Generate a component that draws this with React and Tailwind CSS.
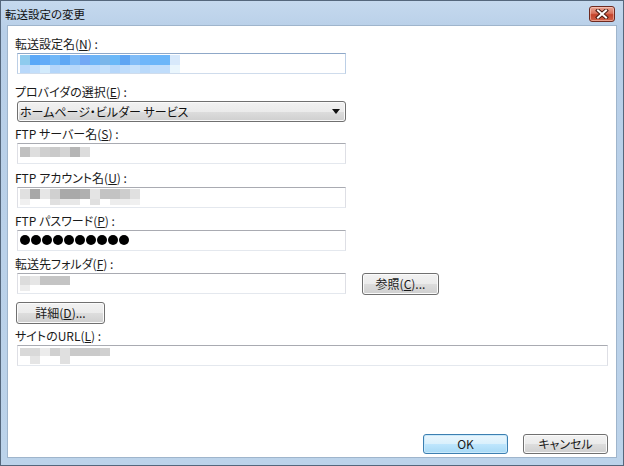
import React from "react";

const FONT = { fontFamily: '"Noto Sans CJK JP", "Noto Sans", sans-serif' };

function Blocks({ rows }) {
  return (
    <div className="flex flex-col">
      {rows.map((r, i) => (
        <div key={i} className="flex" style={{ height: r.h }}>
          {r.c.map((c, j) => (
            <div key={j} style={{ width: 10, height: r.h, background: c }} />
          ))}
        </div>
      ))}
    </div>
  );
}

function Label({ children, className = "" }) {
  return (
    <div className={"h-[16px] leading-[16px] text-[12px] text-[#1a1a1a] whitespace-nowrap " + className}>
      {children}
    </div>
  );
}

function TextBox({ children, className = "", focused = false, pt = "pt-[1px]" }) {
  return (
    <div
      className={
        "h-[21px] ml-[2px] border bg-white pl-[2px] overflow-hidden " +
        pt +
        " " +
        (focused
          ? "border-t-[#8fa8c8] border-x-[#bccfe6] border-b-[#cfdcec] "
          : "border-t-[#a9abb2] border-x-[#dedfe5] border-b-[#e4e8ee] ") +
        className
      }
    >
      {children}
    </div>
  );
}

function Btn({ children, className = "", def = false }) {
  return (
    <div
      className={
        "h-[22px] rounded-[3px] border flex items-center justify-center text-[12px] text-[#1a1a1a] " +
        (def
          ? "border-[#3c7fb1] bg-[linear-gradient(#eaf6fd_0%,#d9f0fc_50%,#bee6fd_51%,#a7d9f5_100%)] shadow-[inset_0_0_0_1px_#c9e9fb] "
          : "border-[#707070] bg-[linear-gradient(#f2f2f2_0%,#ebebeb_50%,#dddddd_51%,#cfcfcf_100%)] shadow-[inset_0_0_0_1px_#fbfbfb] ") +
        className
      }
    >
      {children}
    </div>
  );
}

const U = ({ children }) => <span className="underline">{children}</span>;

export default function App() {
  return (
    <div
      className="w-[624px] h-[466px] bg-[linear-gradient(#c5d9ee,#b8cfe8_30px,#bcd3ea)] border border-[#55677c] flex flex-col overflow-hidden [font-feature-settings:'palt']"
      style={FONT}
    >
      {/* Title bar */}
      <div className="h-[24px] flex items-center justify-between pl-[4px] pr-[8px]">
        <div className="text-[11.5px] text-[#111] leading-[16px] mt-[2px]">転送設定の変更</div>
        <div className="w-[26px] h-[16px] mt-[2px] rounded-[3px] border border-[#6e2a20] bg-[linear-gradient(#e9a593_0%,#d9735e_45%,#c4432b_55%,#d0624a_100%)] flex items-center justify-center shadow-[inset_0_0_0_1px_rgba(255,220,210,0.5)]">
          <svg width="14" height="10" viewBox="0 0 14 10">
            <path d="M3 1.5 L11 8.5 M11 1.5 L3 8.5" stroke="#4a1a12" strokeWidth="4" strokeLinecap="square" />
            <path d="M3 1.5 L11 8.5 M11 1.5 L3 8.5" stroke="#ffffff" strokeWidth="2" strokeLinecap="square" />
          </svg>
        </div>
      </div>

      {/* Content */}
      <div className="flex-1 ml-[6px] mr-[6px] mb-[7px] bg-white border border-[#9fb5cc] flex flex-col pl-[7px] pt-[10px]">
        <Label>
          転送設定名(<U>N</U>) :
        </Label>
        <TextBox focused className="mt-[1px] w-[329px]">
          <Blocks
            rows={[
              {
                h: 10,
                c: ["#8ecbee", "#5aa8f8", "#62acf8", "#6fb7f8", "#5fa8f5", "#7cb9f7", "#72a8f5", "#6cb4f7", "#7ab6ea", "#6ab8f8", "#5fa5f3", "#80bcf7", "#6fb6fa", "#6cb6f9", "#6cb6f9", "#d8e9fb"],
              },
              {
                h: 8,
                c: ["#b8d8fa", "#c3dffb", "#d3ebfc", "#b4d6fa", "#bcdcfb", "#b6d8fa", "#c0ddfb", "#bbdafb", "#c4e0fb", "#b6d7fa", "#bfdcfb", "#c6e1fb", "#b9d9fa", "#c2defb", "#c0ddfb", "#eaf6fd"],
              },
            ]}
          />
        </TextBox>

        <Label className="mt-[10px]">
          プロバイダの選択(<U>E</U>) :
        </Label>
        <div className="mt-[1px] ml-[2px] w-[329px] h-[21px] rounded-[3px] border border-[#707070] bg-[linear-gradient(#f2f2f2_0%,#ebebeb_50%,#dddddd_51%,#cfcfcf_100%)] shadow-[inset_0_0_0_1px_#fafafa] flex items-center justify-between pl-[2px] pr-[5px]">
          <span className="text-[12px] text-[#111] leading-[16px]">ホームページ・ビルダー サービス</span>
          <svg width="8" height="5" viewBox="0 0 8 5">
            <path d="M0 0 H8 L4 5 Z" fill="#111" />
          </svg>
        </div>

        <Label className="mt-[4px]">
          FTP サーバー名(<U>S</U>) :
        </Label>
        <TextBox className="mt-[1px] w-[329px]" pt="pt-[3px]">
          <Blocks rows={[{ h: 10, c: ["#c0c0c0", "#dedede", "#cfcfcf", "#c9c9c9", "#d4d4d4", "#b5b5b5", "#dcdcdc"] }]} />
        </TextBox>

        <Label className="mt-[6px]">
          FTP アカウント名(<U>U</U>) :
        </Label>
        <TextBox className="mt-[1px] w-[329px]">
          <Blocks
            rows={[
              { h: 10, c: ["#e0e0e0", "#a8a8a8", "#e6e6e6", "#d0d0d0", "#a9a9a9", "#a9a9a9", "#b0b0b0", "#e4e4e4", "#c3c3c3", "#c3c3c3", "#cdcdcd", "#e0e0e0"] },
              { h: 6, c: ["#f0f0f0", "#ffffff", "#ffffff", "#e0e0e0", "#e8e8e8", "#e8e8e8", "#ffffff", "#e0e0e0", "#ffffff", "#ededed", "#ededed", "#f0f0f0"] },
            ]}
          />
        </TextBox>

        <Label className="mt-[5px]">
          FTP パスワード(<U>P</U>) :
        </Label>
        <TextBox className="mt-[1px] w-[329px] flex items-center" pt="pt-0">
          <div className="flex gap-[1px] mb-[2px]">
            {Array.from({ length: 10 }).map((_, i) => (
              <div key={i} className="w-[10px] h-[10px] rounded-full bg-black" />
            ))}
          </div>
        </TextBox>

        <Label className="mt-[5px]">
          転送先フォルダ(<U>F</U>) :
        </Label>
        <div className="mt-[1px] flex items-start">
          <TextBox className="w-[329px]" pt="pt-[2px]">
            <Blocks
              rows={[
                { h: 9, c: ["#dcdcdc", "#e6e6e6", "#c4c4c4", "#c4c4c4", "#c4c4c4"] },
                { h: 6, c: ["#ececec"] },
              ]}
            />
          </TextBox>
          <Btn className="ml-[16px] w-[77px]">
            参照(<U>C</U>)...
          </Btn>
        </div>

        <Btn className="mt-[7px] ml-[1px] w-[89px]">
          詳細(<U>D</U>)...
        </Btn>

        <Label className="mt-[4px]">
          サイトのURL(<U>L</U>) :
        </Label>
        <TextBox className="mt-[1px] w-[591px]" pt="pt-[2px]">
          <Blocks
            rows={[
              { h: 8, c: ["#d9d9d9", "#d9d9d9", "#ececec", "#d0d0d0", "#e0e0e0", "#cacaca", "#cacaca", "#cacaca", "#d0d0d0"] },
              { h: 8, c: ["#ffffff", "#e5e5e5", "#ffffff", "#ffffff", "#e0e0e0", "#ffffff"] },
            ]}
          />
        </TextBox>

        <div className="mt-[68px] flex justify-end gap-[15px] pr-[8px]">
          <Btn def className="w-[85px] !h-[20px]">
            OK
          </Btn>
          <Btn className="w-[85px] !h-[20px]">キャンセル</Btn>
        </div>
      </div>
    </div>
  );
}
